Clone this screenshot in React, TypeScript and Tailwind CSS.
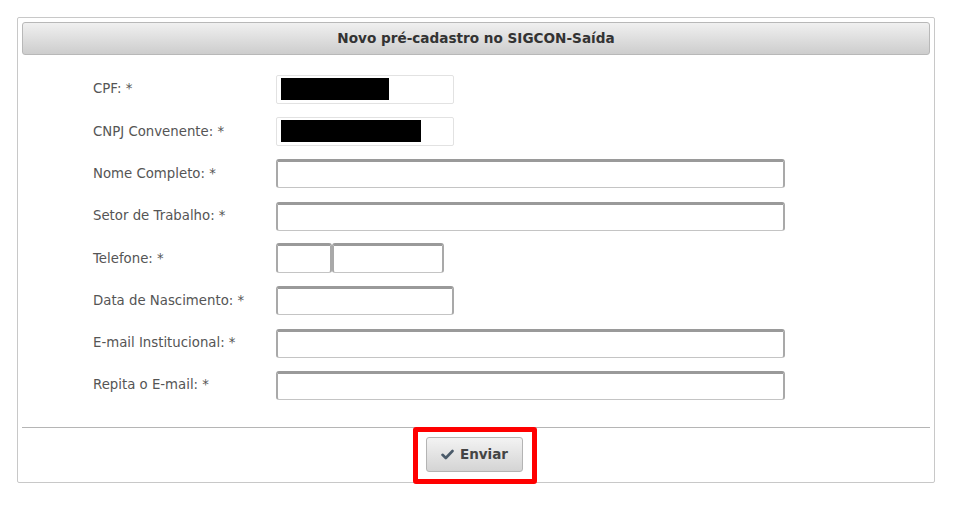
import React from "react";

const fieldCls =
  "h-[29px] bg-white border-2 border-[#a9a9a9] border-t-[3px] border-t-[#9a9a9a] border-b border-b-[#c4c4c4] rounded-[3px]";

function Redacted({ width }: { width: string }) {
  return (
    <div className="h-[29px] w-[178px] bg-white border border-[#e2e2e2] rounded-[2px] px-[4px] flex items-center">
      <div className={`h-[22px] bg-black ${width}`} />
    </div>
  );
}

function Row({ label, children }: { label: string; children: React.ReactNode }) {
  return (
    <div className="h-[42.33px] flex items-center">
      <label className="w-[183px] text-[13.3px] text-[#555]">{label}</label>
      {children}
    </div>
  );
}

export default function App() {
  return (
    <div
      className="w-[953px] h-[515px] bg-white pt-[17px] pl-[17px]"
      style={{ fontFamily: '"DejaVu Sans", Verdana, sans-serif' }}
    >
      <div className="w-[918px] h-[466px] border border-[#c8c8c8] rounded-[2px] px-[4px] pt-[4px] flex flex-col">
        {/* Header Section */}
        <div className="h-[33px] flex items-center justify-center rounded-[3px] border border-[#b8b8b8] bg-gradient-to-b from-[#f0f0f0] to-[#cdcdcd]">
          <h1 className="text-[13.6px] font-bold text-[#333]">Novo pré-cadastro no SIGCON-Saída</h1>
        </div>

        <form className="pl-[71px] pt-[13px] flex flex-col">
          <Row label="CPF: *">
            <Redacted width="w-[108px]" />
          </Row>
          <Row label="CNPJ Convenente: *">
            <Redacted width="w-[140px]" />
          </Row>
          <Row label="Nome Completo: *">
            <div className={`${fieldCls} w-[509px]`} />
          </Row>
          <Row label="Setor de Trabalho: *">
            <div className={`${fieldCls} w-[509px]`} />
          </Row>
          <Row label="Telefone: *">
            <div className="flex">
              <div className={`${fieldCls} h-[30px] w-[56px]`} />
              <div className={`${fieldCls} h-[30px] w-[112px]`} />
            </div>
          </Row>
          <Row label="Data de Nascimento: *">
            <div className={`${fieldCls} w-[178px]`} />
          </Row>
          <Row label="E-mail Institucional: *">
            <div className={`${fieldCls} w-[509px]`} />
          </Row>
          <Row label="Repita o E-mail: *">
            <div className={`${fieldCls} w-[509px]`} />
          </Row>
        </form>

        <div className="mt-auto border-t border-[#b5b5b5] h-[55px] flex justify-center">
          <div className="ml-[-3px] mt-[-1px] w-[124px] h-[57px] shrink-0 border-[5px] border-[#ff0000] rounded-[3px] flex items-center justify-center">
            <button
              type="button"
              className="w-[97px] h-[35px] mt-[-2px] flex items-center justify-center gap-[6px] rounded-[3px] border border-[#b4b4b4] bg-gradient-to-b from-[#f3f3f3] to-[#d4d4d4] text-[13.5px] font-bold text-[#444]"
            >
              <svg width="13" height="11" viewBox="0 0 13 11">
                <path d="M1.5 5.8 L4.8 9 L11.5 2" fill="none" stroke="#4b5b6a" strokeWidth="2.6" strokeLinecap="round" strokeLinejoin="round" />
              </svg>
              Enviar
            </button>
          </div>
        </div>
      </div>
    </div>
  );
}
